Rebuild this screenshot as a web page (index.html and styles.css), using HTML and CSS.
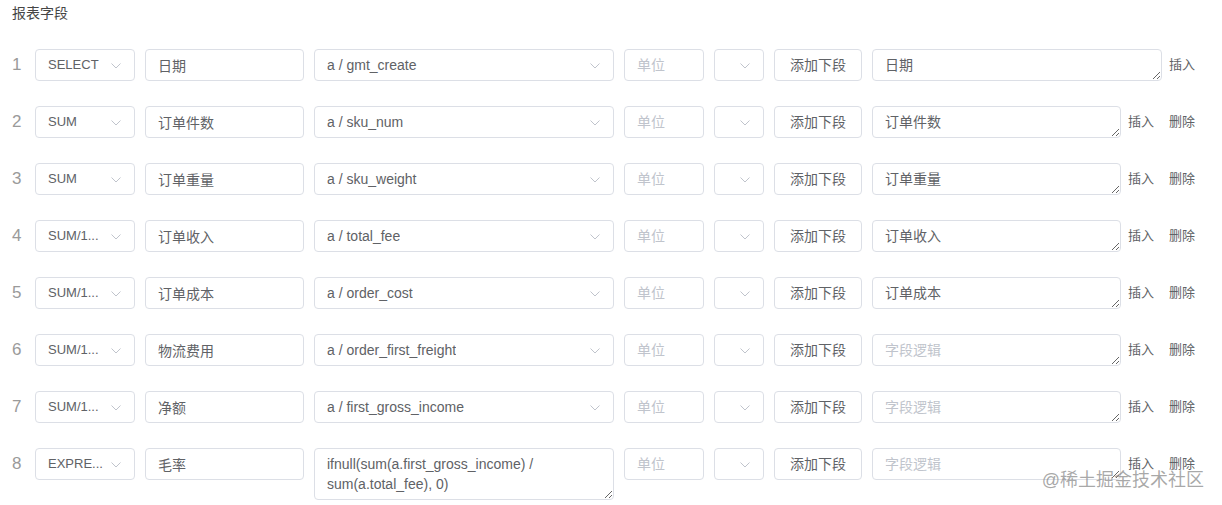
FILE: index.html
```html
<!DOCTYPE html>
<html lang="zh-CN">
<head>
<meta charset="utf-8">
<title>报表字段</title>
<link rel="stylesheet" href="styles.css">
</head>
<body>
<div class="page">
  <h3 class="title">报表字段</h3>
  <div class="rows">
    <div class="row">
      <span class="idx">1</span>
      <div class="ctl sel agg"><span class="sel-text">SELECT</span><svg class="arrow" viewBox="0 0 10 6"><polyline points="0.5,0.5 5,5 9.5,0.5"/></svg></div>
      <input class="ctl inp name" value="日期">
      <div class="ctl sel field"><span class="sel-text">a / gmt_create</span><svg class="arrow" viewBox="0 0 10 6"><polyline points="0.5,0.5 5,5 9.5,0.5"/></svg></div>
      <input class="ctl inp unit" placeholder="单位">
      <div class="ctl sel small"><svg class="arrow" viewBox="0 0 10 6"><polyline points="0.5,0.5 5,5 9.5,0.5"/></svg></div>
      <button class="ctl btn">添加下段</button>
      <textarea class="ctl ta logic" placeholder="字段逻辑">日期</textarea>
      <div class="actions"><a class="act">插入</a></div>
    </div>
    <div class="row">
      <span class="idx">2</span>
      <div class="ctl sel agg"><span class="sel-text">SUM</span><svg class="arrow" viewBox="0 0 10 6"><polyline points="0.5,0.5 5,5 9.5,0.5"/></svg></div>
      <input class="ctl inp name" value="订单件数">
      <div class="ctl sel field"><span class="sel-text">a / sku_num</span><svg class="arrow" viewBox="0 0 10 6"><polyline points="0.5,0.5 5,5 9.5,0.5"/></svg></div>
      <input class="ctl inp unit" placeholder="单位">
      <div class="ctl sel small"><svg class="arrow" viewBox="0 0 10 6"><polyline points="0.5,0.5 5,5 9.5,0.5"/></svg></div>
      <button class="ctl btn">添加下段</button>
      <textarea class="ctl ta logic" placeholder="字段逻辑">订单件数</textarea>
      <div class="actions"><a class="act">插入</a><a class="act">删除</a></div>
    </div>
    <div class="row">
      <span class="idx">3</span>
      <div class="ctl sel agg"><span class="sel-text">SUM</span><svg class="arrow" viewBox="0 0 10 6"><polyline points="0.5,0.5 5,5 9.5,0.5"/></svg></div>
      <input class="ctl inp name" value="订单重量">
      <div class="ctl sel field"><span class="sel-text">a / sku_weight</span><svg class="arrow" viewBox="0 0 10 6"><polyline points="0.5,0.5 5,5 9.5,0.5"/></svg></div>
      <input class="ctl inp unit" placeholder="单位">
      <div class="ctl sel small"><svg class="arrow" viewBox="0 0 10 6"><polyline points="0.5,0.5 5,5 9.5,0.5"/></svg></div>
      <button class="ctl btn">添加下段</button>
      <textarea class="ctl ta logic" placeholder="字段逻辑">订单重量</textarea>
      <div class="actions"><a class="act">插入</a><a class="act">删除</a></div>
    </div>
    <div class="row">
      <span class="idx">4</span>
      <div class="ctl sel agg"><span class="sel-text">SUM/1...</span><svg class="arrow" viewBox="0 0 10 6"><polyline points="0.5,0.5 5,5 9.5,0.5"/></svg></div>
      <input class="ctl inp name" value="订单收入">
      <div class="ctl sel field"><span class="sel-text">a / total_fee</span><svg class="arrow" viewBox="0 0 10 6"><polyline points="0.5,0.5 5,5 9.5,0.5"/></svg></div>
      <input class="ctl inp unit" placeholder="单位">
      <div class="ctl sel small"><svg class="arrow" viewBox="0 0 10 6"><polyline points="0.5,0.5 5,5 9.5,0.5"/></svg></div>
      <button class="ctl btn">添加下段</button>
      <textarea class="ctl ta logic" placeholder="字段逻辑">订单收入</textarea>
      <div class="actions"><a class="act">插入</a><a class="act">删除</a></div>
    </div>
    <div class="row">
      <span class="idx">5</span>
      <div class="ctl sel agg"><span class="sel-text">SUM/1...</span><svg class="arrow" viewBox="0 0 10 6"><polyline points="0.5,0.5 5,5 9.5,0.5"/></svg></div>
      <input class="ctl inp name" value="订单成本">
      <div class="ctl sel field"><span class="sel-text">a / order_cost</span><svg class="arrow" viewBox="0 0 10 6"><polyline points="0.5,0.5 5,5 9.5,0.5"/></svg></div>
      <input class="ctl inp unit" placeholder="单位">
      <div class="ctl sel small"><svg class="arrow" viewBox="0 0 10 6"><polyline points="0.5,0.5 5,5 9.5,0.5"/></svg></div>
      <button class="ctl btn">添加下段</button>
      <textarea class="ctl ta logic" placeholder="字段逻辑">订单成本</textarea>
      <div class="actions"><a class="act">插入</a><a class="act">删除</a></div>
    </div>
    <div class="row">
      <span class="idx">6</span>
      <div class="ctl sel agg"><span class="sel-text">SUM/1...</span><svg class="arrow" viewBox="0 0 10 6"><polyline points="0.5,0.5 5,5 9.5,0.5"/></svg></div>
      <input class="ctl inp name" value="物流费用">
      <div class="ctl sel field"><span class="sel-text">a / order_first_freight</span><svg class="arrow" viewBox="0 0 10 6"><polyline points="0.5,0.5 5,5 9.5,0.5"/></svg></div>
      <input class="ctl inp unit" placeholder="单位">
      <div class="ctl sel small"><svg class="arrow" viewBox="0 0 10 6"><polyline points="0.5,0.5 5,5 9.5,0.5"/></svg></div>
      <button class="ctl btn">添加下段</button>
      <textarea class="ctl ta logic" placeholder="字段逻辑"></textarea>
      <div class="actions"><a class="act">插入</a><a class="act">删除</a></div>
    </div>
    <div class="row">
      <span class="idx">7</span>
      <div class="ctl sel agg"><span class="sel-text">SUM/1...</span><svg class="arrow" viewBox="0 0 10 6"><polyline points="0.5,0.5 5,5 9.5,0.5"/></svg></div>
      <input class="ctl inp name" value="净额">
      <div class="ctl sel field"><span class="sel-text">a / first_gross_income</span><svg class="arrow" viewBox="0 0 10 6"><polyline points="0.5,0.5 5,5 9.5,0.5"/></svg></div>
      <input class="ctl inp unit" placeholder="单位">
      <div class="ctl sel small"><svg class="arrow" viewBox="0 0 10 6"><polyline points="0.5,0.5 5,5 9.5,0.5"/></svg></div>
      <button class="ctl btn">添加下段</button>
      <textarea class="ctl ta logic" placeholder="字段逻辑"></textarea>
      <div class="actions"><a class="act">插入</a><a class="act">删除</a></div>
    </div>
    <div class="row">
      <span class="idx">8</span>
      <div class="ctl sel agg"><span class="sel-text">EXPRE...</span><svg class="arrow" viewBox="0 0 10 6"><polyline points="0.5,0.5 5,5 9.5,0.5"/></svg></div>
      <input class="ctl inp name" value="毛率">
      <textarea class="ctl ta expr">ifnull(sum(a.first_gross_income) / sum(a.total_fee), 0)</textarea>
      <input class="ctl inp unit" placeholder="单位">
      <div class="ctl sel small"><svg class="arrow" viewBox="0 0 10 6"><polyline points="0.5,0.5 5,5 9.5,0.5"/></svg></div>
      <button class="ctl btn">添加下段</button>
      <textarea class="ctl ta logic" placeholder="字段逻辑"></textarea>
      <div class="actions"><a class="act">插入</a><a class="act">删除</a></div>
    </div>
  </div>
  <div class="watermark">@稀土掘金技术社区</div>
</div>
</body>
</html>
```

FILE: styles.css
```css
html, body {
  margin: 0;
  background: #fff;
}

body {
  font-family: "Liberation Sans", Arial, "Noto Sans CJK SC", sans-serif;
  color: #606266;
}

.page {
  position: relative;
  height: 505px;
  box-sizing: border-box;
  padding: 3px 27px 0 12px;
  overflow: hidden;
}

.title {
  margin: 0 0 26px;
  font-size: 14px;
  line-height: 20px;
  font-weight: normal;
  color: #454545;
}

.rows {
  display: flex;
  flex-direction: column;
  gap: 25px;
}

.row {
  display: flex;
  align-items: flex-start;
  gap: 10px;
}

.idx {
  width: 13px;
  flex: none;
  font-size: 17px;
  line-height: 32px;
  color: #9a9a9a;
}

.ctl {
  flex: none;
  box-sizing: border-box;
  height: 32px;
  margin: 0;
  border: 1px solid #dcdfe6;
  border-radius: 4px;
  background: #fff;
  font-family: "Liberation Sans", Arial, "Noto Sans CJK SC", sans-serif;
  font-size: 14px;
  color: #606266;
  outline: none;
}

.inp {
  padding: 0 12px;
  line-height: 30px;
}

.inp::placeholder,
.ta::placeholder {
  color: #c0c4cc;
}

.sel {
  position: relative;
  display: flex;
  align-items: center;
  padding: 0 30px 0 12px;
}

.sel-text {
  white-space: nowrap;
  overflow: hidden;
  line-height: 30px;
}

.arrow {
  position: absolute;
  right: 13px;
  top: 13px;
  width: 10px;
  height: 6px;
  fill: none;
  stroke: #c0c4cc;
  stroke-width: 1;
}

.agg {
  width: 100px;
}

.agg .sel-text {
  font-size: 13px;
}

.name {
  width: 159px;
}

.field {
  width: 300px;
}

.unit {
  width: 80px;
}

.small {
  width: 50px;
}

.btn {
  width: 88px;
  padding: 0;
  line-height: 30px;
  text-align: center;
  cursor: pointer;
}

.ta {
  display: block;
  padding: 5px 12px;
  line-height: 20px;
  resize: vertical;
}

.logic {
  flex: 1 1 auto;
  min-width: 0;
}

.expr {
  width: 300px;
  height: 52px;
}

.actions {
  flex: none;
  display: flex;
  gap: 15px;
  margin-left: -3px;
}

.act {
  font-size: 13px;
  line-height: 32px;
  color: #606266;
  cursor: pointer;
}

.watermark {
  position: absolute;
  right: 18px;
  top: 470px;
  font-size: 18px;
  line-height: 20px;
  color: rgba(140, 140, 140, 0.75);
  pointer-events: none;
}
```
